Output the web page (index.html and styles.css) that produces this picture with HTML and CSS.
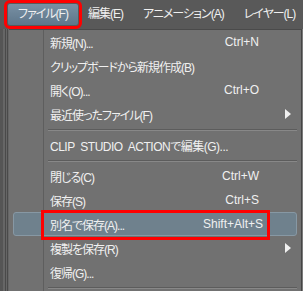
FILE: index.html
```html
<!DOCTYPE html>
<html lang="ja">

<head>
    <meta charset="UTF-8">
    <meta name="viewport" content="width=device-width, initial-scale=1.0">
    <title>ファイルメニュー</title>
    <link rel="stylesheet" href="styles.css">
</head>

<body>
    <div class="screen">
        <div class="menubar">
            <span class="top-item active">ファイル(F)</span>
            <span class="top-item">編集(E)</span>
            <span class="top-item">アニメーション(A)</span>
            <span class="top-item">レイヤー(L)</span>
        </div>

        <div class="body">
            <div class="edge"></div>
            <ul class="menu">
                <li class="item"><span class="label">新規(N)...</span><span class="key">Ctrl+N</span></li>
                <li class="item"><span class="label">クリップボードから新規作成(B)</span></li>
                <li class="item"><span class="label">開く(O)...</span><span class="key">Ctrl+O</span></li>
                <li class="item"><span class="label">最近使ったファイル(F)</span><span class="arrow"></span></li>
                <li class="sep"></li>
                <li class="item"><span class="label wide">CLIP STUDIO ACTIONで編集(G)...</span></li>
                <li class="sep"></li>
                <li class="item"><span class="label">閉じる(C)</span><span class="key">Ctrl+W</span></li>
                <li class="item"><span class="label">保存(S)</span><span class="key">Ctrl+S</span></li>
                <li class="item selected"><span class="label">別名で保存(A)...</span><span class="key">Shift+Alt+S</span><span class="mark"></span></li>
                <li class="item"><span class="label">複製を保存(R)</span><span class="arrow"></span></li>
                <li class="item"><span class="label">復帰(G)...</span></li>
                <li class="sep"></li>
            </ul>
        </div>
    </div>
</body>

</html>
```

FILE: styles.css
```css
body {
    margin: 0;
    font-family: "Liberation Sans", "Noto Sans CJK JP", sans-serif;
    font-feature-settings: "palt";
    font-size: 12px;
    color: #f0f0f0;
    background-color: #707070;
}

.screen {
    width: 303px;
    height: 291px;
    overflow: hidden;
    display: flex;
    flex-direction: column;
}

.menubar {
    height: 29px;
    box-sizing: border-box;
    padding: 4px 0 0 8px;
    display: flex;
    align-items: flex-start;
    background-color: #595959;
    flex-shrink: 0;
}

.top-item {
    height: 21px;
    line-height: 21px;
    padding: 0 10px;
    letter-spacing: -1px;
    white-space: nowrap;
}

.top-item.active {
    background: linear-gradient(#7890a4, #5e768a);
    border-radius: 2px;
    outline: 3px solid #ff0000;
    outline-offset: 1px;
}

.body {
    flex: 1;
    display: flex;
    padding-right: 1px;
    background-color: #7a7a7a;
}

.edge {
    width: 9px;
    flex-shrink: 0;
    background-color: #666666;
    border-left: 3px solid #555555;
    box-sizing: border-box;
    background-image: linear-gradient(to right, transparent 2px, #4a4a4a 2px, #4a4a4a 3px, transparent 3px, transparent 4px, #4a4a4a 4px, #4a4a4a 5px, transparent 5px);
}

.menu {
    flex: 1;
    margin: 0;
    padding: 0;
    list-style: none;
    border-top: 1px solid #4a4a4a;
    border-right: 1px solid #454545;
    background-color: #717171;
    background-image: linear-gradient(to right, transparent 34px, #5e5e5e 34px, #5e5e5e 35px, transparent 35px);
}

.item {
    position: relative;
    height: 24px;
    display: grid;
    grid-template-columns: 1fr auto 42px;
    align-items: center;
    padding-left: 41px;
    white-space: nowrap;
}

.label {
    overflow: hidden;
    letter-spacing: -1px;
}

.label.wide {
    letter-spacing: -0.5px;
    word-spacing: 3px;
}

.key {
    grid-column: 2;
}

.arrow {
    grid-column: 3;
    justify-self: end;
    margin-right: 10px;
    width: 0;
    height: 0;
    border-top: 5px solid transparent;
    border-bottom: 5px solid transparent;
    border-left: 6px solid #f0f0f0;
}

.sep {
    height: 7px;
    margin-left: 39px;
    margin-right: 4px;
    background: linear-gradient(transparent 3px, #5c5c5c 3px, #5c5c5c 4px, #888888 4px, #888888 5px, transparent 5px);
}

.item.selected {
    margin: 0 4px;
    padding-left: 36px;
    grid-template-columns: 1fr auto 33px;
    box-sizing: border-box;
    border: 1px solid #8798a4;
    border-radius: 3px;
    background-color: #6f818d;
}

.mark {
    position: absolute;
    left: 27px;
    top: -3px;
    width: 229px;
    height: 30px;
    box-sizing: border-box;
    border: 3px solid #ff0000;
}
```
